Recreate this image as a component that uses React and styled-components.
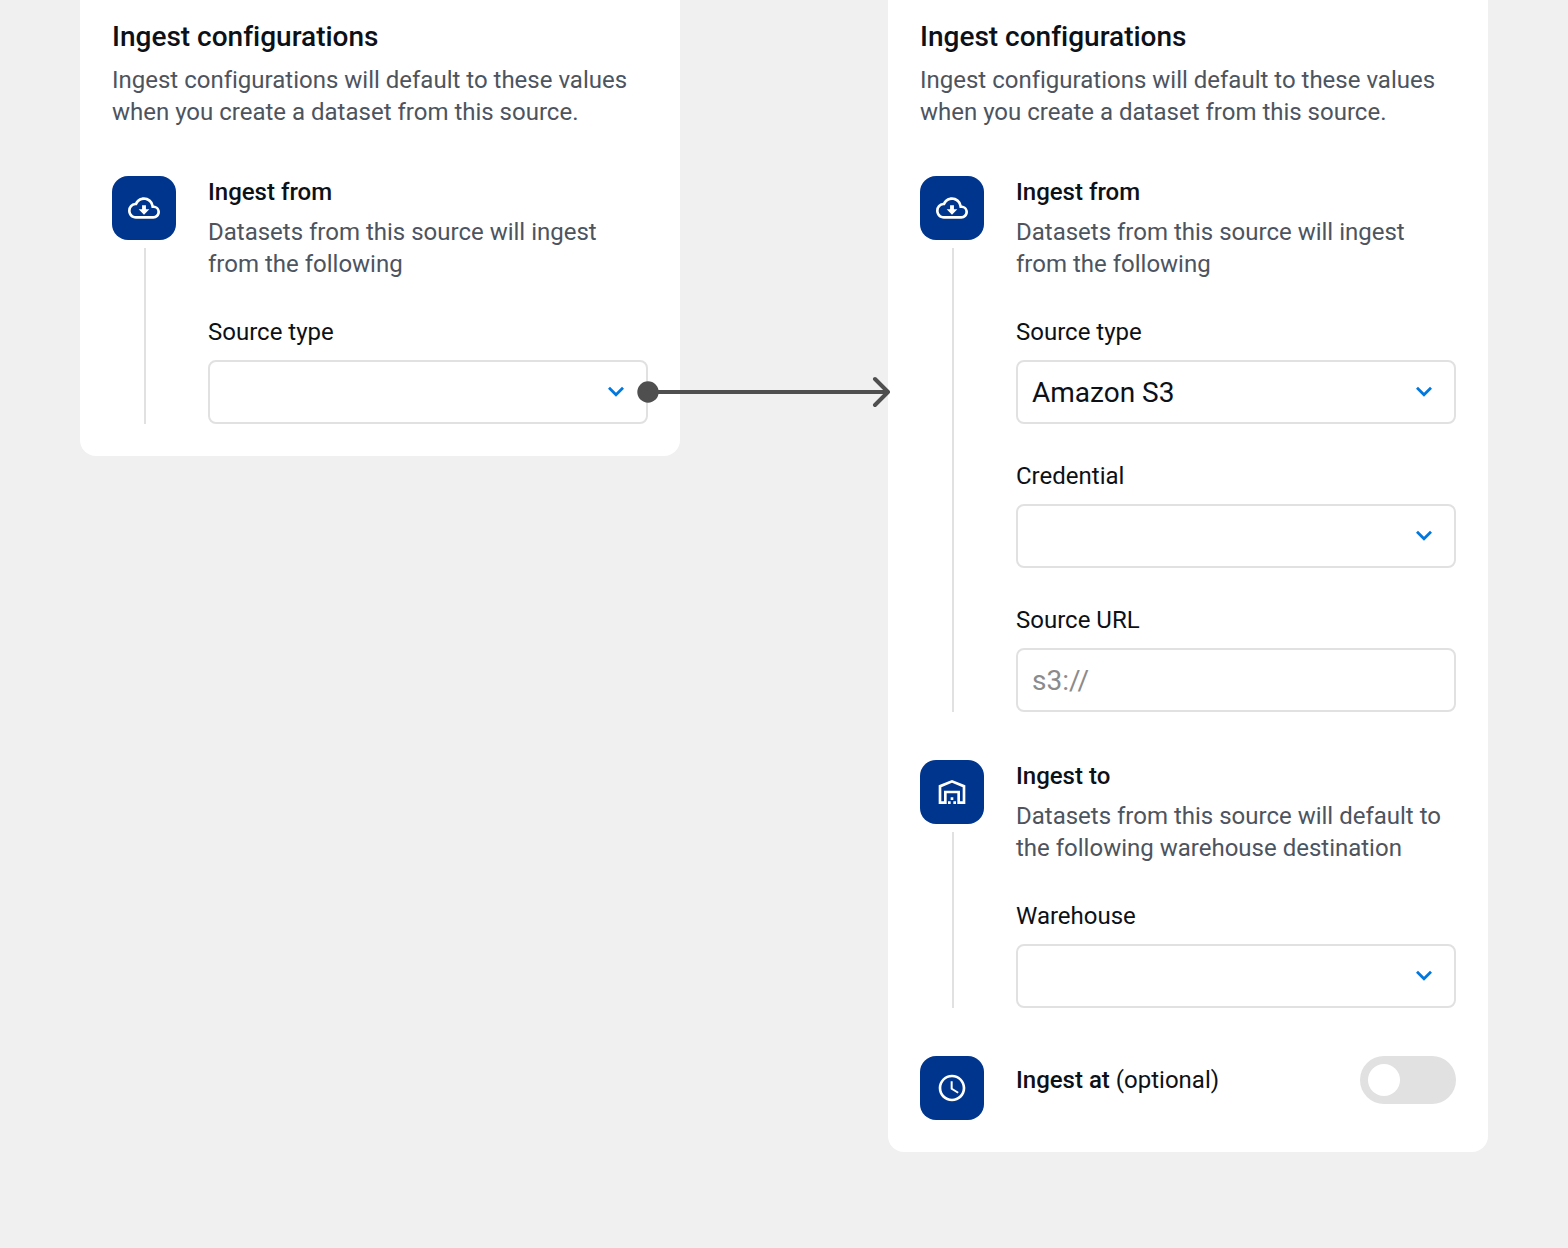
import React from 'react';
import styled, { createGlobalStyle } from 'styled-components';
import { MdOutlineCloudDownload, MdOutlineWarehouse, MdSchedule } from 'react-icons/md';

const GlobalStyle = createGlobalStyle`
  *, *::before, *::after { box-sizing: border-box; }
  body {
    margin: 0;
    background: #f0f0f0;
    font-family: Roboto, sans-serif;
    font-variant-ligatures: none;
    color: #0d1117;
  }
`;

const Canvas = styled.main`
  position: relative;
  display: flex;
  justify-content: space-between;
  align-items: flex-start;
  height: 1248px;
  padding: 0 80px;
  overflow: hidden;
`;

const Card = styled.section`
  display: flex;
  flex-direction: column;
  gap: 48px;
  width: 600px;
  padding: 16px 32px 32px;
  background: #fff;
  border-radius: 0 0 16px 16px;
`;

const Header = styled.header`
  display: flex;
  flex-direction: column;
  gap: 6px;
`;

const Title = styled.h2`
  margin: 0;
  font-size: 28px;
  line-height: 42px;
  font-weight: 500;
`;

const Description = styled.p`
  margin: 0;
  font-size: 24px;
  line-height: 32px;
  color: #4d545e;
`;

const Step = styled.div`
  display: flex;
  gap: 32px;
`;

const Rail = styled.div`
  display: flex;
  flex-direction: column;
  gap: 8px;
  width: 64px;
  flex: none;
`;

const Badge = styled.div`
  display: flex;
  align-items: center;
  justify-content: center;
  width: 64px;
  height: 64px;
  border-radius: 16px;
  background: #00358e;
  color: #fff;
`;

const Connector = styled.div`
  flex: 1;
  width: 2px;
  margin-left: 32px;
  background: #e1e1e1;
`;

const Body = styled.div`
  display: flex;
  flex-direction: column;
  gap: 36px;
  flex: 1;
`;

const Intro = styled.div`
  display: flex;
  flex-direction: column;
  gap: 8px;
`;

const StepTitle = styled.h3`
  margin: 0;
  font-size: 24px;
  line-height: 32px;
  font-weight: 500;
`;

const Optional = styled.span`
  font-weight: 400;
`;

const Field = styled.div`
  display: flex;
  flex-direction: column;
  gap: 12px;
`;

const Label = styled.span`
  font-size: 24px;
  line-height: 32px;
`;

const Control = styled.div`
  display: flex;
  align-items: center;
  justify-content: space-between;
  height: 64px;
  padding: 0 14px;
  border: 2px solid #e1e1e1;
  border-radius: 8px;
  background: #fff;
  font-size: 28px;
  line-height: 40px;
  color: ${(p) => (p.$muted ? '#8b8b8b' : '#0d1117')};
`;

const Value = styled.span`
  padding-top: 2px;
`;

const Chevron = styled.svg`
  flex: none;
  fill: none;
  stroke: #0078de;
  stroke-width: 2.8px;
`;

const ToggleRow = styled.div`
  display: flex;
  align-items: center;
  justify-content: space-between;
  flex: 1;
  height: 48px;
`;

const Toggle = styled.div`
  display: flex;
  align-items: center;
  width: 96px;
  height: 48px;
  padding: 8px;
  border-radius: 24px;
  background: #e1e1e1;
`;

const Knob = styled.div`
  width: 32px;
  height: 32px;
  border-radius: 50%;
  background: #fff;
`;

const FlowArrow = styled.svg`
  position: absolute;
  left: 636px;
  top: 372px;
`;

function SelectField({ label, value }) {
  return (
    <Field>
      <Label>{label}</Label>
      <Control>
        <Value>{value}</Value>
        <Chevron width="32" height="32" viewBox="0 0 32 32">
          <path d="M9 11.8L16 18.8L23 11.8" />
        </Chevron>
      </Control>
    </Field>
  );
}

function ConfigStep({ icon: Icon, title, description, children }) {
  return (
    <Step>
      <Rail>
        <Badge><Icon size={32} /></Badge>
        <Connector />
      </Rail>
      <Body>
        <Intro>
          <StepTitle>{title}</StepTitle>
          <Description>{description}</Description>
        </Intro>
        {children}
      </Body>
    </Step>
  );
}

function ConfigCard({ children }) {
  return (
    <Card>
      <Header>
        <Title>Ingest configurations</Title>
        <Description>
          Ingest configurations will default to these values<br />
          when you create a dataset from this source.
        </Description>
      </Header>
      {children}
    </Card>
  );
}

const fromDescription = <>Datasets from this source will ingest<br />from the following</>;
const toDescription = <>Datasets from this source will default to<br />the following warehouse destination</>;

export default function App() {
  return (
    <>
      <GlobalStyle />
      <Canvas>
        <ConfigCard>
          <ConfigStep icon={MdOutlineCloudDownload} title="Ingest from" description={fromDescription}>
            <SelectField label="Source type" />
          </ConfigStep>
        </ConfigCard>
        <ConfigCard>
          <ConfigStep icon={MdOutlineCloudDownload} title="Ingest from" description={fromDescription}>
            <SelectField label="Source type" value="Amazon S3" />
            <SelectField label="Credential" />
            <Field>
              <Label>Source URL</Label>
              <Control $muted><Value>s3://</Value></Control>
            </Field>
          </ConfigStep>
          <ConfigStep icon={MdOutlineWarehouse} title="Ingest to" description={toDescription}>
            <SelectField label="Warehouse" />
          </ConfigStep>
          <Step>
            <Badge><MdSchedule size={32} /></Badge>
            <ToggleRow>
              <StepTitle>Ingest at <Optional>(optional)</Optional></StepTitle>
              <Toggle><Knob /></Toggle>
            </ToggleRow>
          </Step>
        </ConfigCard>
        <FlowArrow width="256" height="40" viewBox="0 0 256 40" fill="none" stroke="#4f4f4f" strokeWidth="4" strokeLinecap="round" strokeLinejoin="round">
          <circle cx="12" cy="20" r="10.7" fill="#4f4f4f" stroke="none" />
          <path d="M12 20H252M239 7L252 20L239 33" />
        </FlowArrow>
      </Canvas>
    </>
  );
}
